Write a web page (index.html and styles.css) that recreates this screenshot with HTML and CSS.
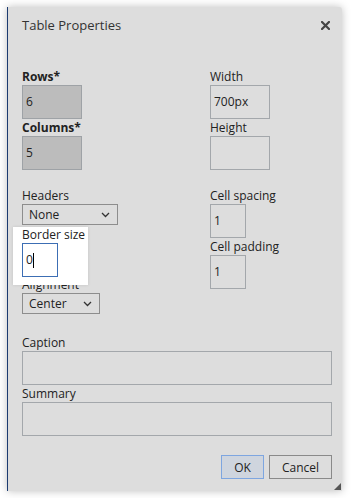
FILE: index.html
```html
<!DOCTYPE html>
<html lang="en">
<head>
  <meta charset="UTF-8" />
  <title>Table Properties</title>
  <link rel="stylesheet" href="styles.css">
</head>
<body>
  <div class="dialog">
    <div class="dialog-header">
      <span class="dialog-title">Table Properties</span>
      <svg class="close" width="9" height="9" viewBox="0 0 9 9">
        <path d="M1 1 L8 8 M8 1 L1 8" stroke="#444" stroke-width="2.2" stroke-linecap="square" />
      </svg>
    </div>

    <div class="dialog-body">
      <div class="columns">
        <!-- Left column -->
        <div class="col">
          <div class="group">
            <label class="strong">Rows*</label>
            <div class="field disabled">6</div>
            <label class="strong">Columns*</label>
            <div class="field disabled">5</div>
          </div>

          <div class="group">
            <label>Headers</label>
            <div class="select select-wide">
              <span>None</span>
              <svg width="9" height="6" viewBox="0 0 9 6"><path d="M1 1 L4.5 4.5 L8 1" fill="none" stroke="#333" stroke-width="1.3" /></svg>
            </div>

            <div class="highlight">
              <label>Border size</label>
              <div class="field small focused">0<span class="caret"></span></div>
            </div>

            <label>Alignment</label>
            <div class="select select-narrow">
              <span>Center</span>
              <svg width="9" height="6" viewBox="0 0 9 6"><path d="M1 1 L4.5 4.5 L8 1" fill="none" stroke="#333" stroke-width="1.3" /></svg>
            </div>
          </div>
        </div>

        <!-- Right column -->
        <div class="col">
          <div class="group">
            <label>Width</label>
            <div class="field">700px</div>
            <label>Height</label>
            <div class="field"></div>
          </div>

          <div class="group">
            <label>Cell spacing</label>
            <div class="field small">1</div>
            <label>Cell padding</label>
            <div class="field small">1</div>
          </div>
        </div>
      </div>

      <div class="wide-fields">
        <label>Caption</label>
        <div class="field textarea"></div>
        <label>Summary</label>
        <div class="field textarea"></div>
      </div>
    </div>

    <div class="dialog-footer">
      <button class="btn btn-primary">OK</button>
      <button class="btn">Cancel</button>
    </div>

    <div class="grip"></div>
  </div>
</body>
</html>
```

FILE: styles.css
```css
:root {
  --bg: #dddddd;
  --text: #222;
  --border: #a3a7ab;
  --disabled: #bcbcbc;
  --focus: #3c6eb4;
}

* {
  box-sizing: border-box;
}

body {
  margin: 0;
  padding: 7px;
  background: #fff;
  font-family: 'Open Sans', sans-serif;
  font-size: 12px;
  color: var(--text);
}

.dialog {
  position: relative;
  width: 335px;
  height: 484px;
  background: var(--bg);
  border-left: 1px solid #1c3b70;
  border-radius: 0 3px 0 0;
  box-shadow: 0 0 8px rgba(0, 0, 0, 0.25);
  padding: 0 10px 0 14px;
}

.dialog-header {
  display: flex;
  justify-content: space-between;
  align-items: center;
  height: 36px;
}

.dialog-title {
  font-size: 13px;
  color: #333;
}

.close {
  margin-right: 2px;
}

.dialog-body {
  padding-top: 26px;
}

.columns {
  display: grid;
  grid-template-columns: 188px 1fr;
}

.col {
  display: flex;
  flex-direction: column;
  gap: 18px;
}

.group {
  display: flex;
  flex-direction: column;
  align-items: flex-start;
}

label {
  display: block;
  line-height: 16px;
  height: 16px;
  white-space: nowrap;
}

label.strong {
  font-weight: 700;
}

.field {
  width: 60px;
  height: 34px;
  border: 1px solid var(--border);
  padding: 0 3px;
  display: flex;
  align-items: center;
  line-height: 16px;
}

.field + label {
  margin-top: 1px;
}

.field.disabled {
  background: var(--disabled);
  border-color: #9ea2a6;
}

.field.small {
  width: 36px;
}

.field.focused {
  border-color: var(--focus);
  background: #fff;
}

.caret {
  display: inline-block;
  width: 1px;
  height: 15px;
  background: #000;
}

.select {
  height: 21px;
  border: 1px solid #8d8d8d;
  display: flex;
  align-items: center;
  justify-content: space-between;
  padding: 0 7px 0 6px;
}

.select-wide {
  width: 96px;
}

.select-narrow {
  width: 78px;
}

.highlight {
  position: relative;
  z-index: 1;
  background: #fff;
  margin: 2px 0 -8px -9px;
  padding: 0 9px 8px 9px;
  width: 75px;
  box-shadow: 0 0 3px rgba(0, 0, 0, 0.12);
}

.wide-fields {
  margin-top: 21px;
}

.field.textarea {
  width: 310px;
}

.dialog-footer {
  display: flex;
  justify-content: flex-end;
  gap: 5px;
  margin-top: 19px;
}

.btn {
  font-family: 'Open Sans', sans-serif;
  font-size: 12px;
  color: var(--text);
  height: 24px;
  width: 63px;
  background: var(--bg);
  border: 1px solid #8a8a8a;
  padding: 0;
}

.btn-primary {
  width: 43px;
  background: #cfd5de;
  border-color: #7ea6e0;
}

.grip {
  position: absolute;
  right: 1px;
  bottom: 1px;
  width: 0;
  height: 0;
  border-style: solid;
  border-width: 0 0 7px 7px;
  border-color: transparent transparent #555 transparent;
}
```
